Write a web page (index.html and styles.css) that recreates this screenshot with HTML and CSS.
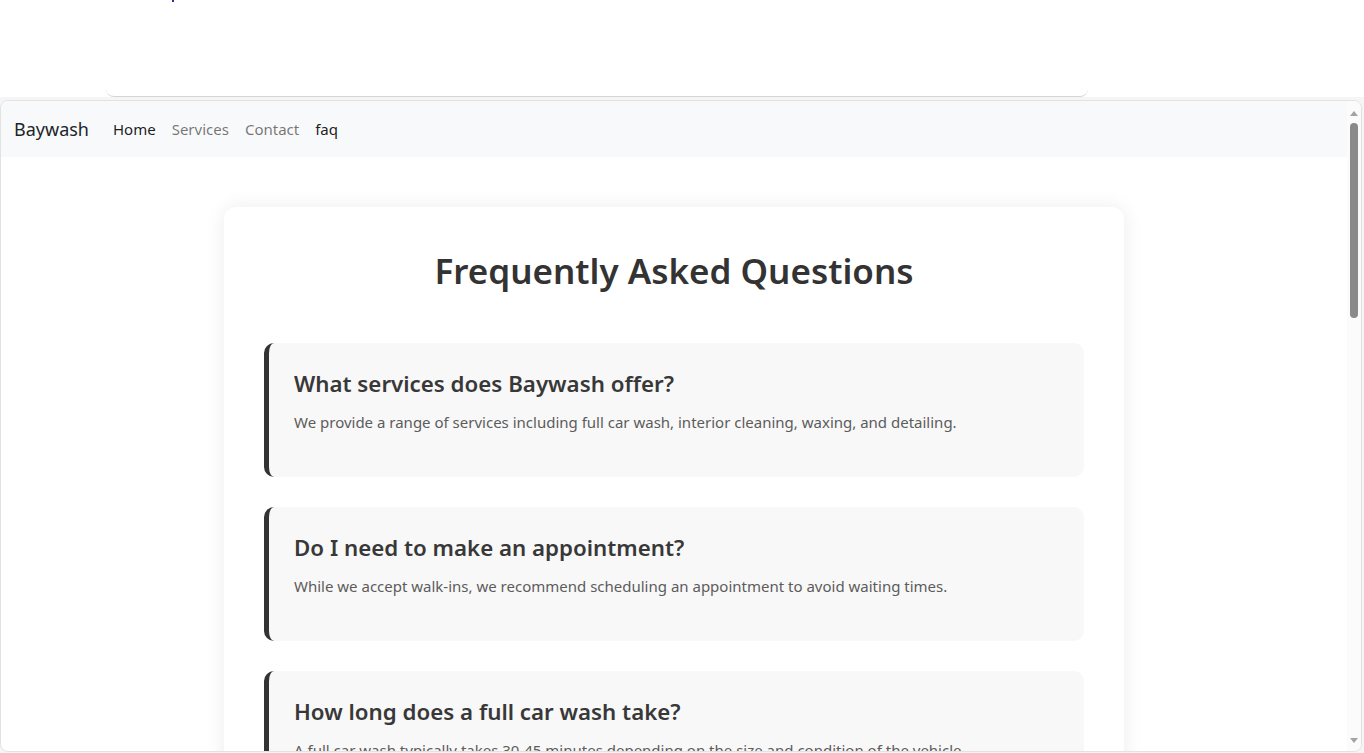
FILE: index.html
```html
<!DOCTYPE html>
<html lang="en">
<head>
<meta charset="utf-8">
<title>Baywash FAQ</title>
<link rel="stylesheet" href="styles.css">
</head>
<body>
  <div class="top">
    <span class="dot"></span>
    <div class="topbar"></div>
  </div>
  <div class="wrap">
    <div class="frame">
      <div class="viewport">
        <nav class="navbar">
          <a class="brand" href="#">Baywash</a>
          <a class="nav-link active" href="#">Home</a>
          <a class="nav-link" href="#">Services</a>
          <a class="nav-link" href="#">Contact</a>
          <a class="nav-link active" href="#">faq</a>
        </nav>
        <main class="container">
          <h1 class="title">Frequently Asked Questions</h1>
          <div class="faq-item">
            <h3>What services does Baywash offer?</h3>
            <p>We provide a range of services including full car wash, interior cleaning, waxing, and detailing.</p>
          </div>
          <div class="faq-item">
            <h3>Do I need to make an appointment?</h3>
            <p>While we accept walk-ins, we recommend scheduling an appointment to avoid waiting times.</p>
          </div>
          <div class="faq-item">
            <h3>How long does a full car wash take?</h3>
            <p>A full car wash typically takes 30-45 minutes depending on the size and condition of the vehicle.</p>
          </div>
        </main>
      </div>
      <div class="scrollbar">
        <span class="arrow up"></span>
        <div class="track"><div class="thumb"></div></div>
        <span class="arrow down"></span>
      </div>
    </div>
  </div>
</body>
</html>
```

FILE: styles.css
```css
* { box-sizing: border-box; }
html, body { margin: 0; padding: 0; }
body {
  width: 1364px;
  height: 753px;
  overflow: hidden;
  background: #fff;
  font-family: "Noto Sans", "Open Sans", sans-serif;
}
.top {
  height: 97px;
}
.dot {
  display: block;
  width: 2px;
  height: 2px;
  margin-left: 172px;
  background: #3030a0;
}
.topbar {
  margin-left: 106px;
  width: 982px;
  height: 95px;
  border-bottom: 1px solid #d4d4d4;
  border-radius: 0 0 8px 8px;
}
.wrap {
  height: 656px;
  background: #f5f5f5;
  padding: 3px 2px 1px 0;
}
.frame {
  height: 100%;
  background: #fff;
  border: 1px solid #e2e2e2;
  border-radius: 8px;
  display: flex;
  overflow: hidden;
}
.viewport {
  flex: 1;
  overflow: hidden;
}
.navbar {
  height: 56px;
  background: #f8f9fa;
  display: flex;
  align-items: center;
  padding: 0 13px;
}
.navbar a { text-decoration: none; }
.brand {
  font-size: 18px;
  color: #212529;
  margin-right: 16px;
}
.nav-link {
  font-size: 15px;
  padding: 8px;
  color: rgba(0,0,0,0.55);
}
.nav-link.active { color: rgba(0,0,0,0.9); }
.container {
  width: 900px;
  margin: 50px auto 0;
  background: #fff;
  border-radius: 12px;
  box-shadow: 0 0 20px rgba(0,0,0,0.08);
  padding: 40px;
}
.title {
  margin: 0 0 48px;
  text-align: center;
  font-size: 35px;
  line-height: 48px;
  font-weight: 600;
  color: #333;
}
.faq-item {
  background: #f8f8f8;
  border-left: 5px solid #333;
  border-radius: 10px;
  padding: 26px 25px 25px;
  margin-bottom: 30px;
}
.faq-item h3 {
  margin: 0 0 12px;
  font-size: 22.3px;
  line-height: 29px;
  font-weight: 600;
  color: #383838;
}
.faq-item p {
  margin: 0 0 18px;
  font-size: 15px;
  line-height: 24px;
  color: #5c5c5c;
}
.scrollbar {
  width: 14px;
  display: flex;
  flex-direction: column;
  align-items: center;
  padding: 10px 0 8px;
  background: #fbfbfb;
}
.arrow {
  width: 0;
  height: 0;
  border-left: 4px solid transparent;
  border-right: 4px solid transparent;
}
.arrow.up { border-bottom: 5px solid #a3a3a3; }
.arrow.down { border-top: 5px solid #a3a3a3; }
.track {
  flex: 1;
  width: 100%;
  display: flex;
  justify-content: center;
  padding-top: 7px;
}
.thumb {
  width: 8px;
  height: 195px;
  background: #8a8a8a;
  border-radius: 4px;
}
```
